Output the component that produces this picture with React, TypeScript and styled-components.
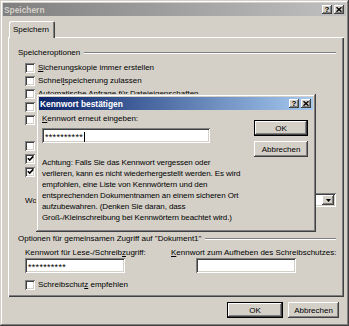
import React from "react";
import styled, { createGlobalStyle, css } from "styled-components";

const face = "#d4d0c8";
const shadow = "#808080";
const darkShadow = "#404040";

const GlobalStyle = createGlobalStyle`
  html, body {
    margin: 0;
    padding: 0;
    background: ${face};
  }
  body {
    font-family: "Liberation Sans", Arial, sans-serif;
    font-size: 8px;
    color: #000;
  }
`;

const raised = css`
  background: ${face};
  box-shadow: inset -1px -1px ${darkShadow}, inset 1px 1px #fff,
    inset -2px -2px ${shadow}, inset 2px 2px ${face};
`;

const sunken = css`
  background: #fff;
  box-shadow: inset 1px 1px ${shadow}, inset -1px -1px #fff,
    inset 2px 2px ${darkShadow}, inset -2px -2px ${face};
`;

const frame = css`
  background: ${face};
  box-shadow: inset -1px -1px ${darkShadow}, inset 1px 1px ${face},
    inset -2px -2px ${shadow}, inset 2px 2px #fff;
`;

const Window = styled.div`
  position: relative;
  width: 349px;
  height: 326px;
  box-sizing: border-box;
  padding: 3px;
  display: flex;
  flex-direction: column;
  ${frame};
`;

const TitleBar = styled.div<{ active?: boolean }>`
  height: 13px;
  display: flex;
  align-items: center;
  padding: 0 2px 0 1px;
  background: ${({ active }) =>
    active
      ? "linear-gradient(to right, #0a246a, #a6caf0)"
      : "linear-gradient(to right, #808080, #c0c0c0)"};
  color: ${({ active }) => (active ? "#fff" : face)};
`;

const TitleText = styled.span`
  flex: 1;
  font-weight: bold;
  font-size: 8.4px;
  white-space: nowrap;
`;

const CaptionButtons = styled.div`
  display: flex;
  gap: 2px;
`;

const CaptionButton = styled.div`
  width: 10px;
  height: 9px;
  box-sizing: border-box;
  display: flex;
  align-items: center;
  justify-content: center;
  color: #000;
  font-weight: bold;
  font-size: 8px;
  line-height: 9px;
  ${raised};
`;

const Body = styled.div`
  display: flex;
  flex-direction: column;
  padding: 0 2px 0 5px;
`;

const TabStrip = styled.div`
  display: flex;
  margin-top: 5px;
  padding-left: 1px;
`;

const Tab = styled.div`
  position: relative;
  z-index: 1;
  width: 46px;
  height: 17px;
  margin-bottom: -1px;
  box-sizing: border-box;
  padding: 4px 0 0 4px;
  background: ${face};
  border-radius: 2px 2px 0 0;
  box-shadow: inset 1px 1px #fff, inset -1px 0 ${darkShadow},
    inset -2px 0 ${shadow};
`;

const Panel = styled.div`
  height: 260px;
  box-sizing: border-box;
  padding: 10px 8px 0 10px;
  display: flex;
  flex-direction: column;
  box-shadow: inset 1px 1px #fff, inset -1px -1px ${darkShadow},
    inset -2px -2px ${shadow};
`;

const GroupHeader = styled.div<{ gap?: number }>`
  display: flex;
  align-items: center;
  height: 11px;
  margin-top: ${({ gap }) => gap ?? 0}px;
  white-space: nowrap;
`;

const GroupLine = styled.div`
  flex: 1;
  height: 1px;
  margin-left: 4px;
  margin-top: 1px;
  background: ${shadow};
  border-bottom: 1px solid #fff;
`;

const CheckList = styled.div`
  display: flex;
  flex-direction: column;
  margin-top: 3px;
`;

const CheckRow = styled.div<{ indent?: boolean; gap?: number }>`
  display: flex;
  align-items: center;
  height: 13px;
  gap: 3px;
  margin-top: ${({ gap }) => gap ?? 0}px;
  padding-left: ${({ indent }) => (indent ? 21 : 7)}px;
  white-space: nowrap;
`;

const Label = styled.span`
  white-space: nowrap;
`;

const Box = styled.div`
  width: 10px;
  height: 10px;
  flex: none;
  box-sizing: border-box;
  display: flex;
  align-items: center;
  justify-content: center;
  ${sunken};
`;

const CheckBox = ({ checked }: { checked?: boolean }) => (
  <Box>
    {checked && (
      <svg width="7" height="7" viewBox="0 0 7 7">
        <path d="M0.8 3.2 L2.7 5.1 L6.2 1.4" fill="none" stroke="#000" strokeWidth="1.6" />
      </svg>
    )}
  </Box>
);

const SaveAsRow = styled.div`
  display: flex;
  align-items: center;
  height: 14px;
  margin-top: 2px;
  padding-left: 7px;
  white-space: nowrap;
`;

const ComboBox = styled.div`
  margin-left: auto;
  width: 190px;
  height: 14px;
  box-sizing: border-box;
  padding: 2px;
  display: flex;
  justify-content: flex-end;
  ${sunken};
`;

const ComboButton = styled.div`
  width: 12px;
  height: 10px;
  display: flex;
  align-items: center;
  justify-content: center;
  ${raised};
`;

const FieldGrid = styled.div`
  display: grid;
  grid-template-columns: 146px 1fr;
  margin-top: 4px;
  padding-left: 7px;
  white-space: nowrap;
`;

const FieldLabel = styled.div`
  height: 10px;
  line-height: 10px;
`;

const TextField = styled.div<{ width: number; offset?: number; top?: number }>`
  width: ${({ width }) => width}px;
  height: 15px;
  box-sizing: border-box;
  margin-left: ${({ offset }) => offset ?? 0}px;
  margin-top: ${({ top }) => top ?? 0}px;
  padding: 3px 0 0 3px;
  display: flex;
  align-items: center;
  font-size: 9px;
  letter-spacing: 0.3px;
  line-height: 9px;
  ${sunken};
`;

const Caret = styled.span`
  display: inline-block;
  width: 1px;
  height: 10px;
  margin-left: 1px;
  background: #000;
`;

const Footer = styled.div`
  display: flex;
  justify-content: flex-end;
  gap: 5px;
  margin-top: 5px;
  padding-right: 5px;
`;

const PushButton = styled.div<{ width: number; isDefault?: boolean }>`
  width: ${({ width }) => width}px;
  height: 16px;
  box-sizing: border-box;
  display: flex;
  align-items: center;
  justify-content: center;
  ${raised};
  ${({ isDefault }) =>
    isDefault &&
    css`
      border: 1px solid #000;
    `}
`;

const Dialog = styled.div`
  position: absolute;
  left: 36px;
  top: 94px;
  width: 280px;
  height: 138px;
  box-sizing: border-box;
  padding: 3px;
  display: flex;
  flex-direction: column;
  ${frame};
`;

const DialogBody = styled.div`
  display: grid;
  grid-template-columns: 1fr 54px;
  padding: 0 5px 0 3px;
`;

const DialogMain = styled.div`
  min-width: 0;
  padding-top: 3px;
  white-space: nowrap;
`;

const DialogLabel = styled.div`
  height: 11px;
  line-height: 11px;
`;

const DialogButtons = styled.div`
  display: flex;
  flex-direction: column;
  gap: 5px;
  padding-top: 10px;
`;

const Warning = styled.div`
  margin-top: 14px;
  line-height: 11px;
  letter-spacing: -0.1px;
`;

const CloseGlyph = () => (
  <svg width="6" height="5" viewBox="0 0 6 5">
    <path d="M0.5 0.3 L5.5 4.7 M5.5 0.3 L0.5 4.7" stroke="#000" strokeWidth="1.4" />
  </svg>
);

const Caption = () => (
  <CaptionButtons>
    <CaptionButton>?</CaptionButton>
    <CaptionButton>
      <CloseGlyph />
    </CaptionButton>
  </CaptionButtons>
);

// rows 4-10 sit behind the password dialog; only their boxes peek out
const options: { label?: React.ReactNode; checked?: boolean; indent?: boolean }[] = [
  { label: <><u>S</u>icherungskopie immer erstellen</> },
  { label: <>Schnel<u>l</u>speicherung zulassen</> },
  { label: <>Automatische Anfrage für Dateieigenschaften</> },
  {},
  {},
  { indent: true },
  {},
  { checked: true },
  { checked: true },
  { indent: true },
];

export default function App() {
  return (
    <>
      <GlobalStyle />
      <Window>
        <TitleBar>
          <TitleText>Speichern</TitleText>
          <Caption />
        </TitleBar>
        <Body>
          <TabStrip>
            <Tab>Speichern</Tab>
          </TabStrip>
          <Panel>
            <GroupHeader>
              Speicheroptionen
              <GroupLine />
            </GroupHeader>
            <CheckList>
              {options.map((o, i) => (
                <CheckRow key={i} indent={o.indent}>
                  <CheckBox checked={o.checked} />
                  {o.label && <Label>{o.label}</Label>}
                </CheckRow>
              ))}
            </CheckList>
            <SaveAsRow>
              <Label>Wo</Label>
              <ComboBox>
                <ComboButton>
                  <svg width="5" height="3" viewBox="0 0 5 3">
                    <path d="M0 0 H5 L2.5 3 Z" fill="#000" />
                  </svg>
                </ComboButton>
              </ComboBox>
            </SaveAsRow>
            <GroupHeader gap={26}>
              Optionen für gemeinsamen Zugriff auf "Dokument1"
              <GroupLine />
            </GroupHeader>
            <FieldGrid>
              <FieldLabel>Kennwort für Lese-/Schreib<u>z</u>ugriff:</FieldLabel>
              <FieldLabel><u>K</u>ennwort zum Aufheben des Schreibschutzes:</FieldLabel>
              <TextField width={100}>**********</TextField>
              <TextField width={100} offset={25} />
            </FieldGrid>
            <CheckRow gap={5}>
              <CheckBox />
              <Label>Schreibschut<u>z</u> empfehlen</Label>
            </CheckRow>
          </Panel>
          <Footer>
            <PushButton width={56} isDefault>OK</PushButton>
            <PushButton width={51}>Abbrechen</PushButton>
          </Footer>
        </Body>

        <Dialog>
          <TitleBar active>
            <TitleText>Kennwort bestätigen</TitleText>
            <Caption />
          </TitleBar>
          <DialogBody>
            <DialogMain>
              <DialogLabel><u>K</u>ennwort erneut eingeben:</DialogLabel>
              <TextField width={168} top={4}>
                **********<Caret />
              </TextField>
              <Warning>
                Achtung: Falls Sie das Kennwort vergessen oder
                <br />
                verlieren, kann es nicht wiederhergestellt werden. Es wird
                <br />
                empfohlen, eine Liste von Kennwörtern und den
                <br />
                entsprechenden Dokumentnamen an einem sicheren Ort
                <br />
                aufzubewahren. (Denken Sie daran, dass
                <br />
                Groß-/Kleinschreibung bei Kennwörtern beachtet wird.)
              </Warning>
            </DialogMain>
            <DialogButtons>
              <PushButton width={54} isDefault>OK</PushButton>
              <PushButton width={54}>Abbrechen</PushButton>
            </DialogButtons>
          </DialogBody>
        </Dialog>
      </Window>
    </>
  );
}
